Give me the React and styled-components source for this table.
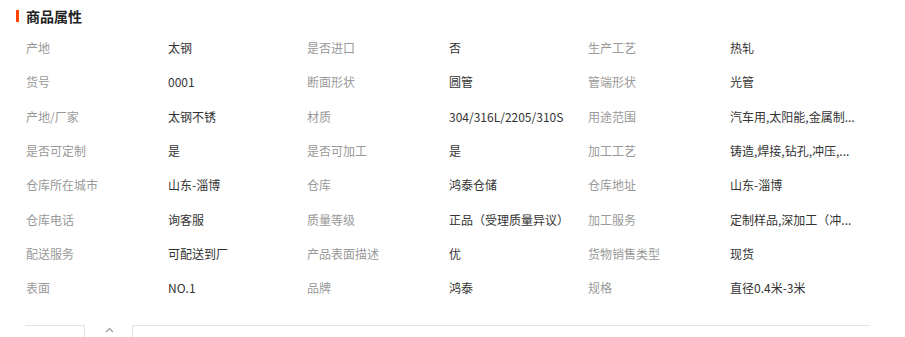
import React from "react";
import styled, { createGlobalStyle } from "styled-components";

const Global = createGlobalStyle`
  html, body { margin: 0; padding: 0; background: #fff; }
  body { font-family: "Noto Sans CJK SC", "Liberation Sans", sans-serif; }
`;

const Wrap = styled.div`
  width: 905px;
  height: 337px;
  overflow: hidden;
  box-sizing: border-box;
  padding: 6px 0 0 16px;
`;

const Title = styled.h3`
  margin: 0;
  display: flex;
  align-items: center;
  height: 20px;
  font-size: 14px;
  font-weight: 700;
  color: #222;
`;

const Bar = styled.span`
  width: 3px;
  height: 12px;
  background: #ff4400;
  margin-right: 7px;
`;

const Grid = styled.div`
  margin: 5px 0 0 10px;
  display: grid;
  grid-template-columns: repeat(3, 142px 139px);
  grid-auto-rows: 34.3px;
  align-items: center;
  font-size: 12px;
  line-height: 18px;
`;

const Label = styled.div`
  color: #999;
  white-space: nowrap;
`;

const Value = styled.div`
  color: #333;
  white-space: nowrap;
`;

const Toggle = styled.div`
  display: flex;
  margin: 20px 0 0 9px;
  height: 20px;
`;

const LeftSeg = styled.div`
  width: 59px;
  border-top: 1px solid #e3e3e3;
  border-right: 1px solid #e3e3e3;
`;

const Arrow = styled.div`
  width: 47px;
  display: flex;
  justify-content: center;
  padding-top: 2px;
  padding-left: 1px;
  box-sizing: border-box;
`;

const RightSeg = styled.div`
  width: 737px;
  border-top: 1px solid #e3e3e3;
  border-left: 1px solid #e3e3e3;
`;

const rows = [
  ["产地", "太钢", "是否进口", "否", "生产工艺", "热轧"],
  ["货号", "0001", "断面形状", "圆管", "管端形状", "光管"],
  ["产地/厂家", "太钢不锈", "材质", "304/316L/2205/310S", "用途范围", "汽车用,太阳能,金属制..."],
  ["是否可定制", "是", "是否可加工", "是", "加工工艺", "铸造,焊接,钻孔,冲压,..."],
  ["仓库所在城市", "山东-淄博", "仓库", "鸿泰仓储", "仓库地址", "山东-淄博"],
  ["仓库电话", "询客服", "质量等级", "正品（受理质量异议）", "加工服务", "定制样品,深加工（冲..."],
  ["配送服务", "可配送到厂", "产品表面描述", "优", "货物销售类型", "现货"],
  ["表面", "NO.1", "品牌", "鸿泰", "规格", "直径0.4米-3米"],
];

export default function App() {
  return (
    <>
      <Global />
      <Wrap>
        <Title>
          <Bar />
          商品属性
        </Title>
        <Grid>
          {rows.map((r, i) =>
            r.map((t, j) =>
              j % 2 === 0 ? (
                <Label key={`${i}-${j}`}>{t}</Label>
              ) : (
                <Value key={`${i}-${j}`}>{t}</Value>
              )
            )
          )}
        </Grid>
        <Toggle>
          <LeftSeg />
          <Arrow>
            <svg width="9" height="6" viewBox="0 0 9 6">
              <path d="M1 5 L4.5 1.5 L8 5" fill="none" stroke="#999" strokeWidth="1.2" />
            </svg>
          </Arrow>
          <RightSeg />
        </Toggle>
      </Wrap>
    </>
  );
}
